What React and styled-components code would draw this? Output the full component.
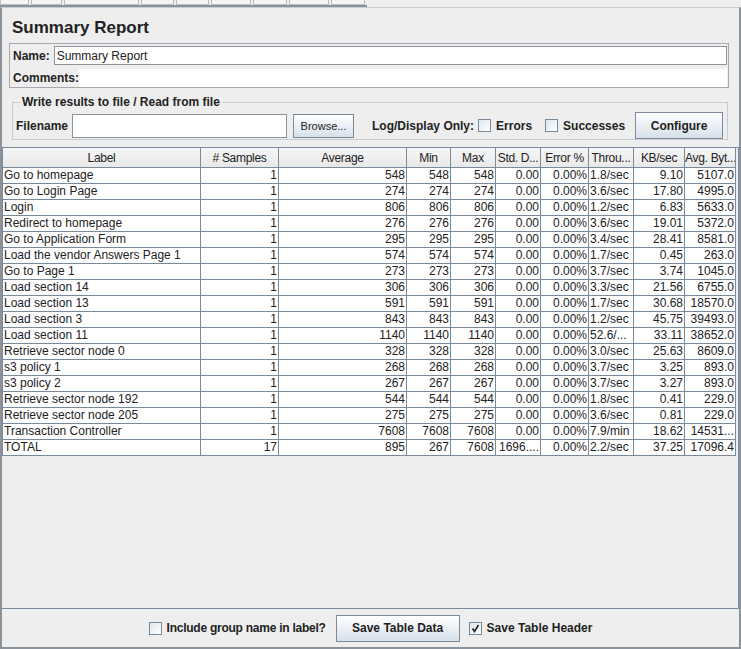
import React from "react";
import styled, { createGlobalStyle } from "styled-components";

const GlobalStyle = createGlobalStyle`
  html, body {
    margin: 0;
    padding: 0;
    background: #eeeeee;
  }
  body {
    font-family: "Liberation Sans", Arial, sans-serif;
    font-size: 12px;
    color: #222;
  }
`;

const Frame = styled.div`
  width: 741px;
  height: 649px;
  display: flex;
  flex-direction: column;
  overflow: hidden;
  background: #eeeeee;
`;

const TabStrip = styled.div`
  height: 5px;
  display: flex;
  border-bottom: 2px solid #8a939c;
  width: 367px;
  box-sizing: content-box;
`;

const Tab = styled.div`
  width: ${(p) => p.w}px;
  height: 4px;
  border: 1px solid #b8bec4;
  border-top: none;
  background: #f4f4f4;
  margin-right: 2px;
`;

const Panel = styled.div`
  flex: 1;
  display: flex;
  flex-direction: column;
  border-left: 2px solid #8a939c;
  border-right: 2px solid #8a939c;
  border-bottom: 2px solid #8a939c;
  border-top: 1px solid #c9ced3;
  min-height: 0;
`;

const Title = styled.div`
  font-weight: bold;
  font-size: 17px;
  line-height: 20px;
  color: #222;
  padding: 10px 0 0 10px;
  height: 20px;
`;

const NameBox = styled.div`
  margin: 5px 10px 0 7px;
  border: 1px solid #a3a9af;
  height: 42px;
  display: flex;
  flex-direction: column;
  gap: 2px;
  padding: 1px 1px 0 3px;
`;

const FieldRow = styled.div`
  display: flex;
  align-items: center;
  height: ${(p) => p.h}px;
`;

const BoldLabel = styled.span`
  font-weight: bold;
  font-size: 12px;
  color: #222;
  white-space: nowrap;
  margin-right: ${(p) => p.mr || 0}px;
  margin-left: ${(p) => p.ml || 0}px;
  letter-spacing: ${(p) => p.ls || 0}px;
`;

const TextInput = styled.div`
  flex: ${(p) => (p.w ? "none" : 1)};
  width: ${(p) => (p.w ? `${p.w}px` : "auto")};
  height: ${(p) => p.h || 19}px;
  box-sizing: border-box;
  background: #fff;
  border: 1px solid ${(p) => (p.plain ? "transparent" : "#8a939c")};
  font-size: 12px;
  padding: 0 2px;
  display: flex;
  align-items: center;
  color: #222;
`;

const Fieldset = styled.fieldset`
  margin: 7px 11px 0 10px;
  padding: 3px 3px 2px 3px;
  border: 1px solid #c4ccd4;
  height: 38px;
  display: flex;
  align-items: center;
  min-width: 0;
`;

const Legend = styled.legend`
  font-weight: bold;
  font-size: 12px;
  color: #222;
  padding: 0 2px;
  margin-left: 4px;
`;

const Button = styled.div`
  height: ${(p) => p.h || 24}px;
  width: ${(p) => p.w}px;
  box-sizing: border-box;
  border: 1px solid #7a8a99;
  background: linear-gradient(#ffffff, #d6e0ea);
  display: flex;
  align-items: center;
  justify-content: center;
  font-size: ${(p) => (p.small ? 11 : 12)}px;
  font-weight: ${(p) => (p.small ? "normal" : "bold")};
  color: #222;
  margin-left: ${(p) => p.ml || 0}px;
  flex: none;
`;

const Check = styled.div`
  width: 13px;
  height: 13px;
  box-sizing: border-box;
  border: 1px solid #7a8a99;
  background: linear-gradient(135deg, #dce6ef, #ffffff);
  margin: 0 5px 0 ${(p) => p.ml || 0}px;
  display: flex;
  align-items: center;
  justify-content: center;
  flex: none;
`;

const ScrollPane = styled.div`
  margin: 7px 0 0 0;
  height: 462px;
  border: 1px solid #7a8a99;
  border-left: none;
  box-sizing: border-box;
  overflow: hidden;
`;

const Table = styled.table`
  border-collapse: collapse;
  table-layout: fixed;
  width: 733px;
  font-size: 12px;
  color: #222;
`;

const Th = styled.th`
  height: 19px;
  padding: 0;
  font-weight: normal;
  letter-spacing: -0.3px;
  background: linear-gradient(#f6f6f6, #e8e8e8);
  border: 1px solid #7a8a99;
  border-top: none;
  white-space: nowrap;
  overflow: hidden;
  text-align: center;
`;

const Td = styled.td`
  height: 15px;
  padding: 0 1px 0 1px;
  background: #fff;
  border: 1px solid #7a8a99;
  white-space: nowrap;
  overflow: hidden;
  text-align: ${(p) => (p.left ? "left" : "right")};
  line-height: 15px;
`;

const BottomBar = styled.div`
  flex: 1;
  display: flex;
  align-items: center;
  justify-content: center;
`;

const headers = [
  ["Label", 198],
  ["# Samples", 78],
  ["Average", 128],
  ["Min", 44],
  ["Max", 45],
  ["Std. D...", 45],
  ["Error %", 48],
  ["Throu...", 45],
  ["KB/sec", 51],
  ["Avg. Byt...", 51],
];

const rows = [
  ["Go to homepage", 1, 548, "1.8/sec", "9.10", "5107.0"],
  ["Go to Login Page", 1, 274, "3.6/sec", "17.80", "4995.0"],
  ["Login", 1, 806, "1.2/sec", "6.83", "5633.0"],
  ["Redirect to homepage", 1, 276, "3.6/sec", "19.01", "5372.0"],
  ["Go to Application Form", 1, 295, "3.4/sec", "28.41", "8581.0"],
  ["Load the vendor Answers Page 1", 1, 574, "1.7/sec", "0.45", "263.0"],
  ["Go to Page 1", 1, 273, "3.7/sec", "3.74", "1045.0"],
  ["Load section 14", 1, 306, "3.3/sec", "21.56", "6755.0"],
  ["Load section 13", 1, 591, "1.7/sec", "30.68", "18570.0"],
  ["Load section 3", 1, 843, "1.2/sec", "45.75", "39493.0"],
  ["Load section 11", 1, 1140, "52.6/...", "33.11", "38652.0"],
  ["Retrieve sector node 0", 1, 328, "3.0/sec", "25.63", "8609.0"],
  ["s3 policy 1", 1, 268, "3.7/sec", "3.25", "893.0"],
  ["s3 policy 2", 1, 267, "3.7/sec", "3.27", "893.0"],
  ["Retrieve sector node 192", 1, 544, "1.8/sec", "0.41", "229.0"],
  ["Retrieve sector node 205", 1, 275, "3.6/sec", "0.81", "229.0"],
  ["Transaction Controller", 1, 7608, "7.9/min", "18.62", "14531..."],
];

const tabs = [28, 30, 76, 33, 32, 40, 33, 40, 33];

const CheckMark = () => (
  <svg width="9" height="9" viewBox="0 0 9 9">
    <path d="M1.5 4.5 L3.5 7.5 L7.5 1" fill="none" stroke="#222" strokeWidth="1.6" />
  </svg>
);

export default function App() {
  return (
    <>
      <GlobalStyle />
      <Frame>
        <TabStrip>
          {tabs.map((w, i) => (
            <Tab key={i} w={w} />
          ))}
        </TabStrip>
        <Panel>
          <Title>Summary Report</Title>
          <NameBox>
            <FieldRow h={21}>
              <BoldLabel mr={4}>Name:</BoldLabel>
              <TextInput>Summary Report</TextInput>
            </FieldRow>
            <FieldRow h={19}>
              <BoldLabel>Comments:</BoldLabel>
              <TextInput plain h={18} />
            </FieldRow>
          </NameBox>
          <Fieldset>
            <Legend>Write results to file / Read from file</Legend>
            <BoldLabel mr={4}>Filename</BoldLabel>
            <TextInput w={215} h={24} />
            <Button w={61} small ml={6}>
              Browse...
            </Button>
            <BoldLabel ml={18}>Log/Display Only:</BoldLabel>
            <Check ml={4} />
            <BoldLabel>Errors</BoldLabel>
            <Check ml={13} />
            <BoldLabel>Successes</BoldLabel>
            <Button w={88} h={27} ml={10}>
              Configure
            </Button>
          </Fieldset>
          <ScrollPane>
            <Table>
              <colgroup>
                {headers.map(([h, w]) => (
                  <col key={h} style={{ width: w }} />
                ))}
              </colgroup>
              <thead>
                <tr>
                  {headers.map(([h]) => (
                    <Th key={h}>{h}</Th>
                  ))}
                </tr>
              </thead>
              <tbody>
                {rows.map(([label, n, v, thr, kb, avg]) => (
                  <tr key={label}>
                    <Td left>{label}</Td>
                    <Td>{n}</Td>
                    <Td>{v}</Td>
                    <Td>{v}</Td>
                    <Td>{v}</Td>
                    <Td>0.00</Td>
                    <Td>0.00%</Td>
                    <Td left>{thr}</Td>
                    <Td>{kb}</Td>
                    <Td>{avg}</Td>
                  </tr>
                ))}
                <tr>
                  <Td left>TOTAL</Td>
                  <Td>17</Td>
                  <Td>895</Td>
                  <Td>267</Td>
                  <Td>7608</Td>
                  <Td>1696....</Td>
                  <Td>0.00%</Td>
                  <Td left>2.2/sec</Td>
                  <Td>37.25</Td>
                  <Td>17096.4</Td>
                </tr>
              </tbody>
            </Table>
          </ScrollPane>
          <BottomBar>
            <Check />
            <BoldLabel ls={-0.25}>Include group name in label?</BoldLabel>
            <Button w={124} h={27} ml={10}>
              Save Table Data
            </Button>
            <Check ml={9}>
              <CheckMark />
            </Check>
            <BoldLabel>Save Table Header</BoldLabel>
          </BottomBar>
        </Panel>
      </Frame>
    </>
  );
}
